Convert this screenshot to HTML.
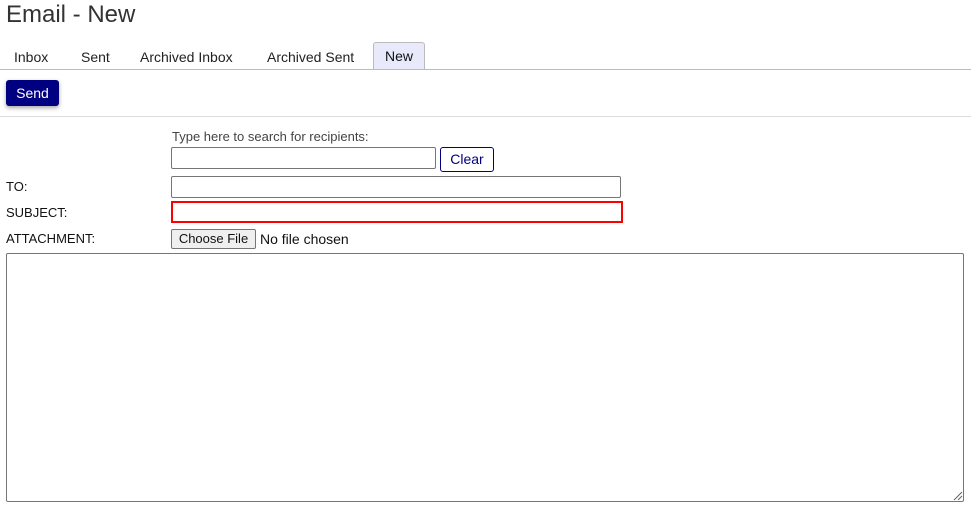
<!DOCTYPE html>
<html><head><meta charset="utf-8"><style>
*{box-sizing:border-box;margin:0;padding:0}
body{width:971px;height:509px;background:#fff;font-family:"Liberation Sans",sans-serif;position:relative;overflow:hidden;color:#222}
.a{position:absolute;white-space:nowrap}
h1{position:absolute;left:6px;top:1px;font-size:24px;font-weight:normal;color:#333}
.tab{position:absolute;top:49px;font-size:14px;color:#222}
.box{position:absolute;border:1px solid #767676;border-radius:2px;background:#fff}
.lbl{position:absolute;left:6px;font-size:13px;color:#111}
</style></head><body>
<h1>Email - New</h1>
<div class="tab" style="left:14px">Inbox</div>
<div class="tab" style="left:81px">Sent</div>
<div class="tab" style="left:140px">Archived Inbox</div>
<div class="tab" style="left:267px">Archived Sent</div>
<div class="a" style="left:373px;top:42px;width:52px;height:28px;background:#e8eafc;border:1px solid #bbb;border-bottom:none;border-radius:3px 3px 0 0;font-size:14px;color:#111;text-align:center;line-height:27px">New</div>
<div class="a" style="left:0;top:69px;width:971px;height:1px;background:#bbb"></div>
<div class="a" style="left:6px;top:80px;width:53px;height:26px;background:#000080;border-radius:3px;color:#fff;font-size:14px;text-align:center;line-height:26px;box-shadow:0 2px 4px rgba(0,0,0,.35)">Send</div>
<div class="a" style="left:0;top:116px;width:971px;height:1px;background:#ddd"></div>
<div class="a" style="left:172px;top:129px;font-size:13px;color:#444">Type here to search for recipients:</div>
<div class="box" style="left:171px;top:147px;width:265px;height:22px"></div>
<div class="a" style="left:440px;top:147px;width:54px;height:25px;border:1px solid #000080;border-radius:3px;font-size:14px;color:#000080;text-align:center;line-height:23px">Clear</div>
<div class="lbl" style="top:179px">TO:</div>
<div class="box" style="left:171px;top:176px;width:450px;height:22px"></div>
<div class="lbl" style="top:205px">SUBJECT:</div>
<div class="a" style="left:171px;top:201px;width:452px;height:22px;border:2px solid #f00"></div>
<div class="lbl" style="top:231px">ATTACHMENT:</div>
<div class="a" style="left:171px;top:229px;width:85px;height:20px;border:1px solid #767676;border-radius:2px;background:#efefef;font-size:13px;text-align:center;line-height:18px;color:#111">Choose File</div>
<div class="a" style="left:260px;top:231px;font-size:14px;color:#111">No file chosen</div>
<div class="box" style="left:6px;top:253px;width:958px;height:249px"></div>
<svg class="a" style="left:953px;top:491px" width="10" height="10"><path d="M1 9L9 1M5 9L9 5" stroke="#666" stroke-width="1"/></svg>
</body></html>
